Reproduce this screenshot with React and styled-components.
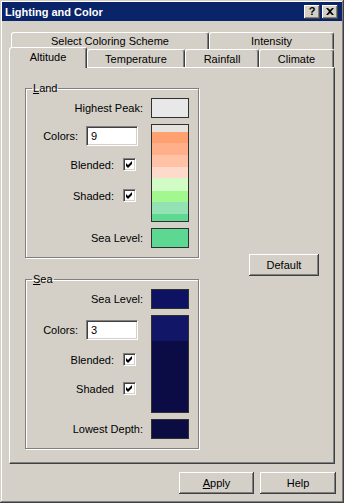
import React from 'react';
import styled, { createGlobalStyle, css } from 'styled-components';

const GlobalStyle = createGlobalStyle`
  html, body { margin: 0; padding: 0; background: #d4d0c8; }
  body { font-family: "Liberation Sans", Arial, sans-serif; font-size: 11px; color: #000; }
  #root { width: 344px; height: 503px; }
`;

const Window = styled.div`
  width: 344px;
  height: 503px;
  box-sizing: border-box;
  padding: 2px;
  background: #d4d0c8;
  box-shadow: inset -1px -1px 0 #404040, inset 1px 1px 0 #d4d0c8,
    inset -2px -2px 0 #808080, inset 2px 2px 0 #fff;
  display: flex;
  flex-direction: column;
`;

const TitleBar = styled.div`
  height: 19px;
  background: #0a246a;
  display: flex;
  align-items: center;
  justify-content: space-between;
  padding: 0 4px 0 3px;
`;

const Title = styled.span`
  color: #fff;
  font-weight: bold;
  font-size: 11px;
`;

const TitleButtons = styled.div`
  display: flex;
  gap: 2px;
`;

const TitleButton = styled.div`
  width: 16px;
  height: 14px;
  box-sizing: border-box;
  background: #d4d0c8;
  box-shadow: inset -1px -1px 0 #404040, inset 1px 1px 0 #fff, inset -2px -2px 0 #808080;
  display: flex;
  align-items: center;
  justify-content: center;
  font-weight: bold;
  font-size: 11px;
  line-height: 11px;
  padding-bottom: 1px;
`;

const Body = styled.div`
  flex: 1;
  display: flex;
  flex-direction: column;
  padding: 11px 6px 0 7px;
`;

const TabControl = styled.div`
  width: 326px;
  display: flex;
  flex-direction: column;
`;

const TabRow = styled.div`
  display: flex;
  height: ${(p) => p.$h}px;
  padding-left: ${(p) => p.$indent || 0}px;
`;

const Tab = styled.div`
  box-sizing: border-box;
  width: ${(p) => p.$w}px;
  height: 100%;
  border: 1px solid;
  border-color: #fff #404040 transparent #fff;
  border-bottom: 0;
  border-radius: 3px 3px 0 0;
  box-shadow: inset -1px 0 0 #808080;
  background: #d4d0c8;
  display: flex;
  align-items: center;
  justify-content: center;
  ${(p) =>
    p.$selected &&
    css`
      height: 21px;
      margin-top: -2px;
      margin-bottom: -1px;
      position: relative;
      z-index: 1;
      padding-bottom: 2px;
    `}
`;

const Panel = styled.div`
  box-sizing: border-box;
  height: 397px;
  border: 1px solid;
  border-color: #fff #404040 #404040 #fff;
  box-shadow: inset -1px -1px 0 #808080;
  display: flex;
  padding: 14px 15px 0 15px;
`;

const Groups = styled.div`
  display: flex;
  flex-direction: column;
  width: 175px;
`;

const Group = styled.fieldset`
  margin: 0;
  box-sizing: border-box;
  width: 174px;
  padding: 3px 9px 9px 0;
  border: 1px solid #808080;
  box-shadow: 1px 1px 0 #fff, inset 1px 1px 0 #fff;
  display: flex;
  flex-direction: column;
  & + & {
    margin-top: 15px;
  }
`;

const Legend = styled.legend`
  padding: 0 1px;
  margin-left: 6px;
  line-height: 13px;
`;

const Row = styled.div`
  display: flex;
  align-items: center;
  justify-content: flex-end;
  gap: 8px;
  height: 20px;
`;

const Swatch = styled.div`
  width: 38px;
  height: 20px;
  box-sizing: border-box;
  border: 1px solid #303030;
  background: ${(p) => p.$c};
`;

const Middle = styled.div`
  display: flex;
  justify-content: flex-end;
  margin: 6px 0;
  gap: 13px;
`;

const Controls = styled.div`
  display: flex;
  flex-direction: column;
  align-items: flex-end;
  padding-top: ${(p) => p.$top}px;
`;

const FieldRow = styled.div`
  display: flex;
  align-items: center;
  gap: 8px;
  height: 20px;
`;

const CheckRow = styled.div`
  display: flex;
  align-items: center;
  gap: 9px;
  height: 13px;
  margin-right: 2px;
  margin-top: ${(p) => p.$gap}px;
`;

const TextInput = styled.div`
  width: 52px;
  height: 20px;
  box-sizing: border-box;
  background: #fff;
  border: 1px solid;
  border-color: #808080 #fff #fff #808080;
  box-shadow: inset 1px 1px 0 #404040, inset -1px -1px 0 #d4d0c8;
  padding-left: 4px;
  display: flex;
  align-items: center;
`;

const CheckBox = styled.span`
  width: 13px;
  height: 13px;
  box-sizing: border-box;
  background: #fff;
  border: 1px solid;
  border-color: #808080 #fff #fff #808080;
  box-shadow: inset 1px 1px 0 #404040, inset -1px -1px 0 #d4d0c8;
  display: flex;
  align-items: center;
  justify-content: center;
`;

const Bar = styled.div`
  width: 38px;
  height: 98px;
  box-sizing: border-box;
  border: 1px solid #303030;
  display: flex;
  flex-direction: column;
`;

const Band = styled.div`
  flex: ${(p) => p.$f} 0 0;
  background: ${(p) => p.$c};
`;

const Side = styled.div`
  margin-left: auto;
  padding-top: 172px;
`;

const Button = styled.div`
  box-sizing: border-box;
  width: ${(p) => p.$w}px;
  height: 22px;
  background: #d4d0c8;
  box-shadow: inset -1px -1px 0 #404040, inset 1px 1px 0 #fff,
    inset -2px -2px 0 #808080;
  display: flex;
  align-items: center;
  justify-content: center;
`;

const Footer = styled.div`
  display: flex;
  justify-content: flex-end;
  gap: 6px;
  margin-top: 8px;
`;

const U = styled.span`
  text-decoration: underline;
`;

const Check = () => (
  <svg width="7" height="7" viewBox="0 0 7 7">
    <path d="M0 2 L2 4 L6 0 L6 3 L2 7 L0 5 Z" fill="#000" />
  </svg>
);

const CloseGlyph = () => (
  <svg width="8" height="7" viewBox="0 0 8 7">
    <path d="M0 0 H2 L4 2 L6 0 H8 L5 3.5 L8 7 H6 L4 5 L2 7 H0 L3 3.5 Z" fill="#000" />
  </svg>
);

const landBands = [
  [6.7, '#e6e3df'],
  [11.6, '#ffa070'],
  [11.7, '#ffb08a'],
  [11.7, '#ffc2a4'],
  [11.6, '#ffd9c9'],
  [12.7, '#d2fcc6'],
  [11.3, '#a2f88e'],
  [12, '#92e2b4'],
  [6.7, '#5fd892'],
];

const seaBands = [
  [25, '#121666'],
  [71, '#0b0c45'],
];

function ColorGroup({ legend, topLabel, topColor, bottomLabel, bottomColor, colors, bands, shadedLabel, top, g1, g2 }) {
  return (
    <Group>
      <Legend>
        <U>{legend[0]}</U>
        {legend.slice(1)}
      </Legend>
      <Row>
        <span>{topLabel}</span>
        <Swatch $c={topColor} />
      </Row>
      <Middle>
        <Controls $top={top}>
          <FieldRow>
            <span>Colors:</span>
            <TextInput>{colors}</TextInput>
          </FieldRow>
          <CheckRow $gap={g1}>
            <span>Blended:</span>
            <CheckBox>
              <Check />
            </CheckBox>
          </CheckRow>
          <CheckRow $gap={g2}>
            <span>{shadedLabel}</span>
            <CheckBox>
              <Check />
            </CheckBox>
          </CheckRow>
        </Controls>
        <Bar>
          {bands.map(([f, c], i) => (
            <Band key={i} $f={f} $c={c} />
          ))}
        </Bar>
      </Middle>
      <Row>
        <span>{bottomLabel}</span>
        <Swatch $c={bottomColor} />
      </Row>
    </Group>
  );
}

export default function App() {
  return (
    <>
      <GlobalStyle />
      <Window>
        <TitleBar>
          <Title>Lighting and Color</Title>
          <TitleButtons>
            <TitleButton>?</TitleButton>
            <TitleButton>
              <CloseGlyph />
            </TitleButton>
          </TitleButtons>
        </TitleBar>
        <Body>
          <TabControl>
            <TabRow $h={17} $indent={2}>
              <Tab $w={198}>Select Coloring Scheme</Tab>
              <Tab $w={125}>Intensity</Tab>
            </TabRow>
            <TabRow $h={18}>
              <Tab $w={78} $selected>
                Altitude
              </Tab>
              <Tab $w={98}>Temperature</Tab>
              <Tab $w={74}>Rainfall</Tab>
              <Tab $w={75}>Climate</Tab>
            </TabRow>
            <Panel>
              <Groups>
                <ColorGroup
                  legend="Land"
                  topLabel="Highest Peak:"
                  topColor="#e8e8e8"
                  bottomLabel="Sea Level:"
                  bottomColor="#5cd893"
                  colors="9"
                  bands={landBands}
                  shadedLabel="Shaded:"
                  top={2}
                  g1={12}
                  g2={18}
                />
                <ColorGroup
                  legend="Sea"
                  topLabel="Sea Level:"
                  topColor="#0e1262"
                  bottomLabel="Lowest Depth:"
                  bottomColor="#0a0c42"
                  colors="3"
                  bands={seaBands}
                  shadedLabel="Shaded"
                  top={5}
                  g1={13}
                  g2={16}
                />
              </Groups>
              <Side>
                <Button $w={70}>Default</Button>
              </Side>
            </Panel>
          </TabControl>
          <Footer>
            <Button $w={75}>
              <span>
                <U>A</U>pply
              </span>
            </Button>
            <Button $w={76}>Help</Button>
          </Footer>
        </Body>
      </Window>
    </>
  );
}
